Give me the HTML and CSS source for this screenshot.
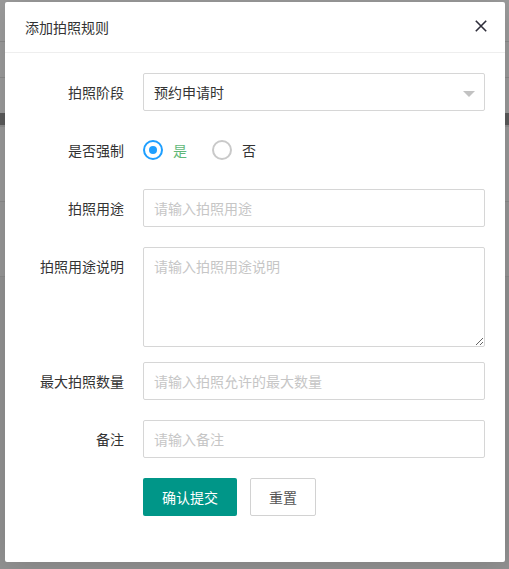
FILE: index.html
```html
<!DOCTYPE html>
<html lang="zh-CN">
<head>
<meta charset="utf-8">
<title>添加拍照规则</title>
<link rel="stylesheet" href="styles.css">
</head>
<body>
  <!-- page content under the dimmed backdrop -->
  <div class="page">
    <div class="band band-top"></div>
    <div class="band band-row"></div>
    <div class="band band-row"></div>
    <div class="band band-dark"></div>
    <div class="band band-mid"></div>
    <div class="band band-mid2"></div>
    <div class="band band-rest"></div>
  </div>

  <div class="layer">
    <div class="layer-title">
      <span>添加拍照规则</span>
      <button class="layer-close" type="button" aria-label="关闭">
        <svg width="12" height="12" viewBox="0 0 12 12"><path d="M0.8 0.8L11.2 11.2M11.2 0.8L0.8 11.2" stroke="#2e2d3a" stroke-width="1.6" fill="none"/></svg>
      </button>
    </div>

    <form class="form">
      <div class="form-item">
        <label class="form-label">拍照阶段</label>
        <div class="select">
          <span>预约申请时</span>
          <i class="edge"></i>
        </div>
      </div>

      <div class="form-item">
        <label class="form-label">是否强制</label>
        <div class="radios">
          <span class="radio checked"><i class="radio-icon"></i><span>是</span></span>
          <span class="radio"><i class="radio-icon"></i><span>否</span></span>
        </div>
      </div>

      <div class="form-item">
        <label class="form-label">拍照用途</label>
        <input class="input" type="text" placeholder="请输入拍照用途">
      </div>

      <div class="form-item form-item-text">
        <label class="form-label">拍照用途说明</label>
        <textarea class="textarea" placeholder="请输入拍照用途说明"></textarea>
      </div>

      <div class="form-item">
        <label class="form-label">最大拍照数量</label>
        <input class="input" type="text" placeholder="请输入拍照允许的最大数量">
      </div>

      <div class="form-item">
        <label class="form-label">备注</label>
        <input class="input" type="text" placeholder="请输入备注">
      </div>

      <div class="form-item">
        <span></span>
        <div class="actions">
          <button class="btn btn-primary" type="button">确认提交</button>
          <button class="btn btn-plain" type="reset">重置</button>
        </div>
      </div>
    </form>
  </div>
</body>
</html>
```

FILE: styles.css
```css
* {
  box-sizing: border-box;
}

html, body {
  margin: 0;
  width: 509px;
  height: 569px;
  overflow: hidden;
}

body {
  position: relative;
  background: #929292;
  font-family: "Noto Sans CJK SC", "Microsoft YaHei", sans-serif;
  font-size: 14px;
  color: #333;
}

/* dimmed page behind the dialog */
.page {
  display: flex;
  flex-direction: column;
}

.band {
  border-bottom: 1px solid #8b8b8b;
}

.band-top {
  height: 42px;
  background: #9d9d9d;
}

.band-row {
  height: 36px;
  background: #9b9b9b;
}

.band-row:nth-child(3) {
  height: 35px;
  border-bottom: 0;
}

.band-dark {
  height: 14px;
  background: #5b5b5b;
  border-bottom: 2px solid #8c8c8c;
}

.band-mid {
  height: 75px;
  background: #999;
}

.band-mid2 {
  height: 75px;
  background: #979797;
}

.band-rest {
  height: 293px;
  background: #929292;
  border-bottom: 0;
}

/* dialog */
.layer {
  position: absolute;
  left: 5px;
  top: 2px;
  width: 500px;
  height: 560px;
  background: #fff;
  border-radius: 2px;
  box-shadow: 1px 1px 30px rgba(0, 0, 0, 0.15);
}

.layer-title {
  height: 51px;
  display: flex;
  align-items: center;
  justify-content: space-between;
  padding: 0 18px 0 20px;
  border-bottom: 1px solid #eee;
  font-size: 14px;
  color: #333;
}

.layer-close {
  border: 0;
  background: none;
  padding: 0;
  width: 12px;
  height: 12px;
  display: block;
  margin-top: -2px;
  cursor: pointer;
}

.layer-close svg {
  display: block;
}

.form {
  padding: 20px 20px 0 0;
}

.form-item {
  display: grid;
  grid-template-columns: 119px 1fr;
  column-gap: 19px;
  align-items: start;
  margin-bottom: 20px;
}

.form-item-text {
  margin-bottom: 15px;
}

.form-label {
  text-align: right;
  line-height: 38px;
  color: #333;
}

.input,
.select,
.textarea {
  display: block;
  width: 100%;
  height: 38px;
  border: 1px solid #d6d6d6;
  border-radius: 2px;
  background: #fff;
  padding: 0 10px;
  font-family: inherit;
  font-size: 14px;
  color: #333;
  outline: none;
}

.input::placeholder,
.textarea::placeholder {
  color: #c6c6c6;
}

.select {
  position: relative;
  display: flex;
  align-items: center;
}

.edge {
  position: absolute;
  right: 9px;
  top: 17px;
  width: 0;
  height: 0;
  border-style: solid;
  border-width: 6px 6px 0;
  border-color: #c2c2c2 transparent transparent;
}

.textarea {
  height: 100px;
  padding: 8px 10px;
  line-height: 20px;
  resize: vertical;
}

.radios {
  display: flex;
  align-items: center;
  height: 38px;
  gap: 25px;
}

.radio {
  display: flex;
  align-items: center;
  gap: 10px;
  color: #333;
}

.radio-icon {
  width: 20px;
  height: 20px;
  border: 2px solid #c9c9c9;
  border-radius: 50%;
  display: flex;
  align-items: center;
  justify-content: center;
}

.radio.checked .radio-icon {
  border-color: #1e9fff;
}

.radio.checked .radio-icon::after {
  content: "";
  width: 8px;
  height: 8px;
  border-radius: 50%;
  background: #1e9fff;
}

.radio.checked span {
  color: #5fb878;
}

.actions {
  display: flex;
  gap: 13px;
}

.btn {
  height: 38px;
  padding: 0 18px;
  border: 1px solid transparent;
  border-radius: 2px;
  font-family: inherit;
  font-size: 14px;
  line-height: 36px;
  cursor: pointer;
}

.btn-primary {
  background: #009688;
  color: #fff;
}

.btn-plain {
  background: #fff;
  border-color: #d2d2d2;
  color: #555;
}
```
